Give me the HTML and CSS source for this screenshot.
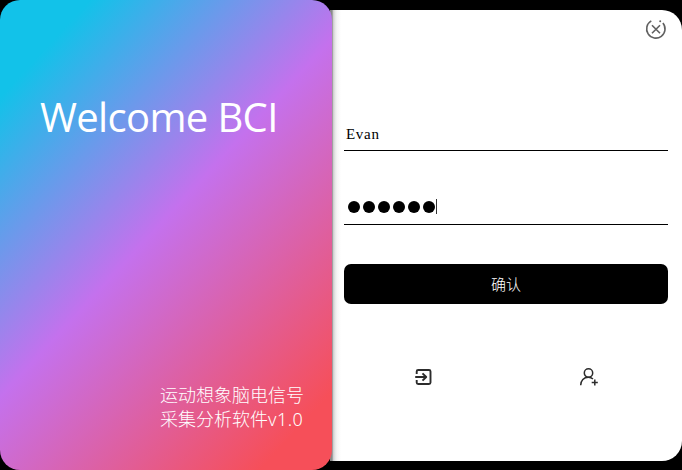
FILE: index.html
```html
<!DOCTYPE html>
<html lang="zh-CN">
<head>
<meta charset="utf-8">
<title>Welcome BCI</title>
<link rel="stylesheet" href="styles.css">
</head>
<body>
<main class="window">
  <section class="hero">
    <h1 class="hero-title">Welcome BCI</h1>
    <p class="hero-caption">运动想象脑电信号<br>采集分析软件<span class="version">v1.0</span></p>
  </section>
  <section class="panel">
    <header class="panel-bar">
      <svg class="close" viewBox="0 0 22 22" fill="none" stroke="#606060" stroke-width="1.6">
        <path d="M6.3 2.9A9.2 9.2 0 1 0 17.9 5"/>
        <path d="M7 7.3l8 8M15 7.3l-8 8"/>
        <circle cx="15.2" cy="3.3" r="1" fill="#606060" stroke="none"/>
      </svg>
    </header>
    <div class="field name">Evan</div>
    <div class="field password"><i class="dot"></i><i class="dot"></i><i class="dot"></i><i class="dot"></i><i class="dot"></i><i class="dot"></i><i class="caret"></i></div>
    <button class="confirm">确认</button>
    <nav class="actions">
      <svg class="action" viewBox="0 0 20 20" fill="none" stroke="#2c2c2c" stroke-width="1.9" stroke-linejoin="round">
        <path d="M3.7 7V4.5Q3.7 3 5.2 3H16Q17.5 3 17.5 4.5V15.5Q17.5 17 16 17H5.2Q3.7 17 3.7 15.5V13"/>
        <path d="M2.2 10H13M9.5 6.3L13.2 10L9.5 13.7"/>
      </svg>
      <svg class="action" viewBox="0 0 20 20" fill="none" stroke="#2c2c2c" stroke-width="1.5">
        <circle cx="9.5" cy="6" r="4.2"/>
        <path d="M1.7 18.3C1.7 13.6 4.8 10.3 9.4 10.3C11.3 10.3 12.8 10.9 14 12"/>
        <path d="M12.7 15.6H18.8M15.8 12.6V18.6"/>
      </svg>
    </nav>
  </section>
</main>
</body>
</html>
```

FILE: styles.css
```css
* { box-sizing: border-box; }

body {
  margin: 0;
  background: #000;
  font-family: "Open Sans", "Noto Sans CJK SC", sans-serif;
}

.window {
  display: flex;
  width: 682px;
  height: 470px;
  overflow: hidden;
}

.hero {
  display: flex;
  flex-direction: column;
  justify-content: space-between;
  width: 332px;
  height: 470px;
  padding: 90px 27px 39px 40px;
  border-radius: 20px;
  background: linear-gradient(132.8deg, #12c2e9 66px, #c471ed 270px, #f64f59 510px);
  color: #fff;
  z-index: 1;
}

.hero-title {
  margin: 0;
  font-size: 40px;
  font-weight: 400;
  line-height: 54px;
  letter-spacing: -0.65px;
  white-space: nowrap;
}

.hero-caption {
  align-self: flex-end;
  width: 145px;
  margin: 0;
  font-family: "Noto Sans CJK SC", sans-serif;
  font-weight: 300;
  font-size: 18px;
  line-height: 24px;
  white-space: nowrap;
}

.version {
  font-family: "Noto Sans", sans-serif;
  letter-spacing: 0.5px;
}

.panel {
  display: flex;
  flex-direction: column;
  width: 352px;
  height: 451px;
  margin: 10px 0 0 -2px;
  padding: 0 14px;
  border-radius: 0 20px 20px 0;
  background: linear-gradient(90deg, #888 2px, #d0d0d0 3.5px, #e6e6e6 5px, #f5f5f5 7px, #fff 11px);
}

.panel-bar {
  display: flex;
  justify-content: flex-end;
  height: 106px;
  padding: 8px 1px 0 0;
}

.close { width: 22px; height: 22px; }

.field {
  display: flex;
  border-bottom: 1px solid #000;
}

.name {
  height: 35px;
  padding: 10px 0 0 2px;
  font: 15px/17px "Liberation Serif", serif;
  letter-spacing: 0.7px;
}

.password {
  align-items: center;
  gap: 3px;
  height: 36px;
  margin-top: 38px;
  padding-left: 4.4px;
}

.dot {
  width: 12px;
  height: 12px;
  border-radius: 50%;
  background: #000;
}

.caret {
  width: 1px;
  height: 15px;
  margin-left: -2px;
  background: #333;
}

.confirm {
  height: 40px;
  margin: 39px 0 0;
  padding: 0;
  border: 0;
  border-radius: 7px;
  background: #000;
  color: #fff;
  font: 300 15px/40px "Noto Sans CJK SC", sans-serif;
}

.actions {
  display: flex;
  justify-content: space-between;
  padding: 63px 69px 0;
}

.action { width: 20px; height: 20px; }
```
